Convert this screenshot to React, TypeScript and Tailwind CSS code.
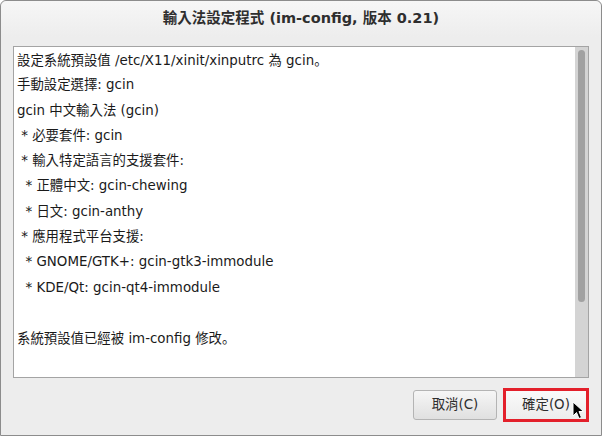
import { ReactNode } from "react";

// the full stop sits low-left in the original, as in the SC/JP glyph
const Stop = () => (
  <span style={{ fontFamily: '"Noto Sans CJK SC", sans-serif' }}>。</span>
);

const lines: ReactNode[] = [
  <>設定系統預設值 /etc/X11/xinit/xinputrc 為 gcin<Stop /></>,
  "手動設定選擇: gcin",
  "gcin 中文輸入法 (gcin)",
  " * 必要套件: gcin",
  " * 輸入特定語言的支援套件:",
  "  * 正體中文: gcin-chewing",
  "  * 日文: gcin-anthy",
  " * 應用程式平台支援:",
  "  * GNOME/GTK+: gcin-gtk3-immodule",
  "  * KDE/Qt: gcin-qt4-immodule",
  "",
  <>系統預設值已經被 im-config 修改<Stop /></>,
];

const font = { fontFamily: '"DejaVu Sans", "Noto Sans CJK TC", sans-serif' };

const Cursor = () => (
  <svg
    className="absolute left-[572px] top-[401px]"
    width="13"
    height="19"
    viewBox="0 0 13 19"
  >
    <path
      d="M1 1 L1 15 L4.5 11.5 L7 17.5 L9.5 16.5 L7 10.5 L11.5 10.5 Z"
      fill="#000"
      stroke="#fff"
      strokeWidth="1"
      strokeLinejoin="round"
    />
  </svg>
);

export default function App() {
  return (
    <div className="relative w-[602px] h-[436px] overflow-hidden" style={font}>
      <div className="flex flex-col w-full h-full bg-[#ededed] border border-[#8c8c8c] rounded-t-[6px]">
        {/* Title */}
        <div className="h-[36px] shrink-0 flex items-center justify-center bg-gradient-to-b from-[#f6f6f6] to-[#ededed] rounded-t-[6px]">
          <span className="text-[14.5px] font-bold text-[#2e2e2e]">
            輸入法設定程式 (im-config, 版本 0.21)
          </span>
        </div>

        {/* Text view */}
        <div className="mx-[12px] mt-[9px] h-[332px] flex border border-[#a4a4a4] bg-white">
          <div className="flex-1 pl-[3px] text-[13.4px] leading-[25px] text-[#1a1a1a] whitespace-pre">
            {lines.map((l, i) => (
              <div key={i} className="h-[25.3px]">
                {l}
              </div>
            ))}
          </div>
          <div className="w-[13px] bg-[#d4d4d4] flex justify-center pt-[3px]">
            <div className="w-[7px] h-[252px] rounded-full bg-[#a1a1a1]" />
          </div>
        </div>

        {/* Buttons */}
        <div className="flex justify-end gap-[6px] mr-[12px] mt-[10px]">
          <button className="mt-[2px] w-[84px] h-[30px] rounded-[3px] border border-[#b4b4b4] bg-gradient-to-b from-[#f6f6f6] to-[#e0e0e0] text-[13.4px] text-[#2e2e2e]">
            取消(C)
          </button>
          <div className="w-[86px] h-[34px] border-[3px] border-[#e3202b]">
            <button className="w-full h-full bg-gradient-to-b from-[#fafafa] to-[#ececec] text-[13.4px] text-[#2e2e2e]">
              確定(O)
            </button>
          </div>
        </div>
      </div>
      <Cursor />
    </div>
  );
}
